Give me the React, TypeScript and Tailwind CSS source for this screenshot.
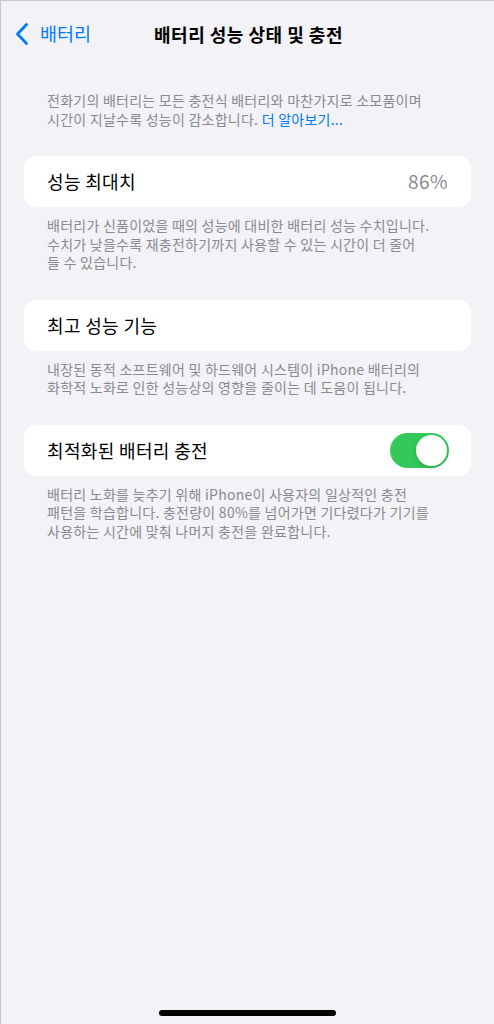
import React from "react";

const font = { fontFamily: '"Noto Sans CJK KR", "Noto Sans", sans-serif' };

function Footer({ children }: { children: React.ReactNode }) {
  return <p className="mt-[9px] px-[23px] text-[14px] leading-[18.5px] tracking-[0.25px] text-[#8a8a8e]">{children}</p>;
}

export default function App() {
  return (
    <div style={font} className="relative h-[1024px] w-[494px] overflow-hidden border-l border-t border-[#c8c8cc] bg-[#f2f2f7]">
      <div className="relative flex h-[44px] items-center mt-[11px]">
        <div className="flex items-center pl-[14px] text-[#007aff]">
          <svg width="14" height="24" viewBox="0 0 14 24" fill="none">
            <path d="M11.5 2.5 L2.5 12 L11.5 21.5" stroke="#007aff" strokeWidth="2.8" strokeLinecap="round" strokeLinejoin="round" />
          </svg>
          <span className="ml-[11px] text-[18.5px]">배터리</span>
        </div>
        <div className="absolute inset-0 flex items-center justify-center pointer-events-none">
          <span className="pl-[2px] text-[18px] font-bold tracking-[0.5px] text-black">배터리 성능 상태 및 충전</span>
        </div>
      </div>

      <div className="mx-[23px]">
        <p className="mt-[35px] px-[23px] text-[14px] leading-[18.5px] tracking-[0.25px] text-[#8a8a8e]">
          전화기의 배터리는 모든 충전식 배터리와 마찬가지로 소모품이며
          <br />
          시간이 지날수록 성능이 감소합니다. <span className="text-[#007aff]">더 알아보기...</span>
        </p>

        <div className="mt-[28px] flex h-[51px] items-center justify-between rounded-[12px] bg-white px-[23px]">
          <span className="text-[18px] tracking-[0.35px] text-black">성능 최대치</span>
          <span className="text-[19px] tracking-[0.5px] text-[#8a8a8e]">86%</span>
        </div>
        <Footer>
          배터리가 신품이었을 때의 성능에 대비한 배터리 성능 수치입니다.
          <br />
          수치가 낮을수록 재충전하기까지 사용할 수 있는 시간이 더 줄어
          <br />
          들 수 있습니다.
        </Footer>

        <div className="mt-[28px] flex h-[51px] items-center rounded-[12px] bg-white px-[23px]">
          <span className="text-[18px] tracking-[0.35px] text-black">최고 성능 기능</span>
        </div>
        <Footer>
          내장된 동적 소프트웨어 및 하드웨어 시스템이 iPhone 배터리의
          <br />
          화학적 노화로 인한 성능상의 영향을 줄이는 데 도움이 됩니다.
        </Footer>

        <div className="mt-[28px] flex h-[51px] items-center justify-between rounded-[12px] bg-white pl-[23px] pr-[22px]">
          <span className="text-[18px] tracking-[0.35px] text-black">최적화된 배터리 충전</span>
          <div className="flex h-[35px] w-[59px] items-center justify-end rounded-full bg-[#34c759] pr-[2px]">
            <div className="h-[31px] w-[31px] rounded-full bg-white shadow-[0_2px_4px_rgba(0,0,0,0.15)]" />
          </div>
        </div>
        <Footer>
          배터리 노화를 늦추기 위해 iPhone이 사용자의 일상적인 충전
          <br />
          패턴을 학습합니다. 충전량이 80%를 넘어가면 기다렸다가 기기를
          <br />
          사용하는 시간에 맞춰 나머지 충전을 완료합니다.
        </Footer>
      </div>

      <div className="absolute bottom-[8px] left-0 right-0 flex justify-center">
        <div className="h-[6px] w-[177px] rounded-full bg-black" />
      </div>
    </div>
  );
}
